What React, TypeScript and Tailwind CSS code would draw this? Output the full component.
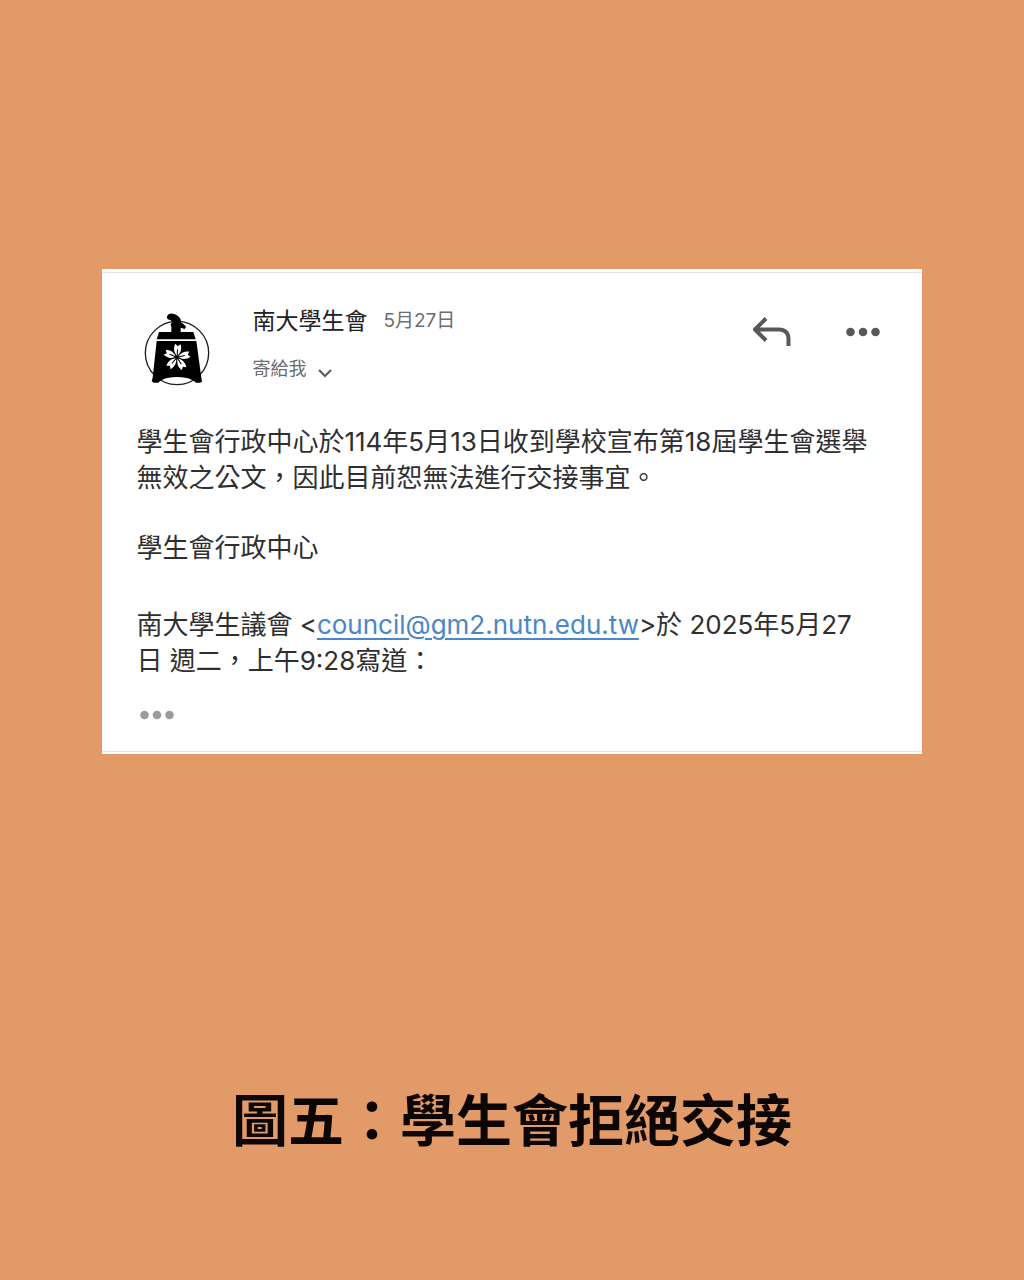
/**
 * Captioned Email Slide
 *
 * A single email message card on a coloured page, with a caption below it.
 */

import React from 'react';

const PETAL_ANGLES = [4, 76, 148, 220, 292];

const BellLogo: React.FC = () => (
  <svg viewBox="0 0 210 234" className="h-[78px] w-[70px]" aria-hidden="true">
    <circle cx="105" cy="129" r="95" fill="#fff" stroke="#1c1c1c" strokeWidth="4" />
    <path
      d="M75 20c2-7 9-11 17-9 9 1 18 7 22 14 3 5 3 9 4 13 6 3 12 8 14 13l-4 6-12-4v13h38l7 22H44l7-22h37V50c-4-5-2-11 3-14-3-4-5-6-8-7-5 0-9-4-8-9z"
      fill="#000"
    />
    <path
      d="M44 93h119l15 110 2 12-6 3h-12c-6-6-16-11-28-14-19-4-39-4-58 0-12 3-22 8-27 14H35l-6-4 3-11z"
      fill="#000"
    />
    <g transform="translate(105 142)">
      {PETAL_ANGLES.map((angle) => (
        <g key={angle} transform={`rotate(${angle})`}>
          <path d="M0-4C-11-14-13-27-8-40L0-33 8-40C13-27 11-14 0-4z" fill="#fff" />
          <path d="M0-2V-24" stroke="#000" strokeWidth="3" />
        </g>
      ))}
    </g>
  </svg>
);

const ReplyIcon: React.FC = () => (
  <svg
    viewBox="0 0 40 32"
    className="h-8 w-10"
    fill="none"
    stroke="currentColor"
    strokeWidth="4"
    strokeLinejoin="round"
    aria-hidden="true"
  >
    <path d="M14 2.500 3 13.500 14 24.500M3 13.500h24c6 0 9.500 3.500 9.500 9.500v7" />
  </svg>
);

const DotsIcon: React.FC = () => (
  <svg viewBox="0 0 36 10" className="h-[10px] w-9" fill="currentColor" aria-hidden="true">
    <circle cx="5.500" cy="5" r="4.300" />
    <circle cx="18" cy="5" r="4.300" />
    <circle cx="30.500" cy="5" r="4.300" />
  </svg>
);

const MessageHeader: React.FC = () => (
  <header className="flex items-start">
    <div className="ml-1.5 mt-[5px] shrink-0">
      <BellLogo />
    </div>
    <div className="ml-10 flex-1">
      <div className="flex items-center gap-4 leading-8">
        <h2 className="text-[23px] text-[#202124]">南大學生會</h2>
        <time dateTime="2025-05-27" className="text-[19px] text-[#6b6c70]">
          5月27日
        </time>
      </div>
      <button
        type="button"
        className="mt-4 flex items-center gap-[11px] text-[18px] leading-8 text-[#6b6c70]"
      >
        寄給我
        <svg
          viewBox="0 0 16 10"
          className="mt-2 h-[10px] w-4"
          fill="none"
          stroke="#58595c"
          strokeWidth="2"
          aria-hidden="true"
        >
          <path d="M2 2l6 6 6-6" />
        </svg>
      </button>
    </div>
    <div className="mr-[7px] mt-[11px] flex items-center gap-[53px] text-[#58585b]">
      <button type="button" aria-label="回覆">
        <ReplyIcon />
      </button>
      <button type="button" aria-label="更多選項">
        <DotsIcon />
      </button>
    </div>
  </header>
);

const MessageBody: React.FC = () => (
  <div className="mt-9 text-[26px] leading-9 text-[#2f2f31]">
    <p>
      學生會行政中心於114年5月13日收到學校宣布第18屆學生會選舉無效之公文，因此目前恕無法進行交接事宜。
    </p>
    <p className="mt-[34px]">學生會行政中心</p>
    <p className="mt-[41px] pr-4">
      南大學生議會 &lt;
      <a
        href="mailto:council@gm2.nutn.edu.tw"
        className="text-[#4a86cb] underline decoration-2 underline-offset-4"
      >
        council@gm2.nutn.edu.tw
      </a>
      &gt;於 2025年5月27<span>日 週二，上午9:28寫道：</span>
    </p>
  </div>
);

export default function App() {
  return (
    <main
      lang="zh-Hant"
      className="flex min-h-screen flex-col bg-[#e39a69] px-[10%] pb-[119px] pt-[269px] font-['Inter','Noto_Sans_CJK_TC',sans-serif]"
    >
      <article className="bg-white pb-0.5 pt-[3px]">
        <div className="border-y border-[#e4e4e6] px-[34px] pb-[31px] pt-8">
          <MessageHeader />
          <MessageBody />
          <button
            type="button"
            aria-label="顯示引用文字"
            className="ml-[3px] mt-[31px] block text-[#9b9a9f]"
          >
            <DotsIcon />
          </button>
        </div>
      </article>
      <h1 className="mt-auto text-center text-[56px] font-bold leading-[80px] text-[#0c0705]">
        圖五：學生會拒絕交接
      </h1>
    </main>
  );
}
